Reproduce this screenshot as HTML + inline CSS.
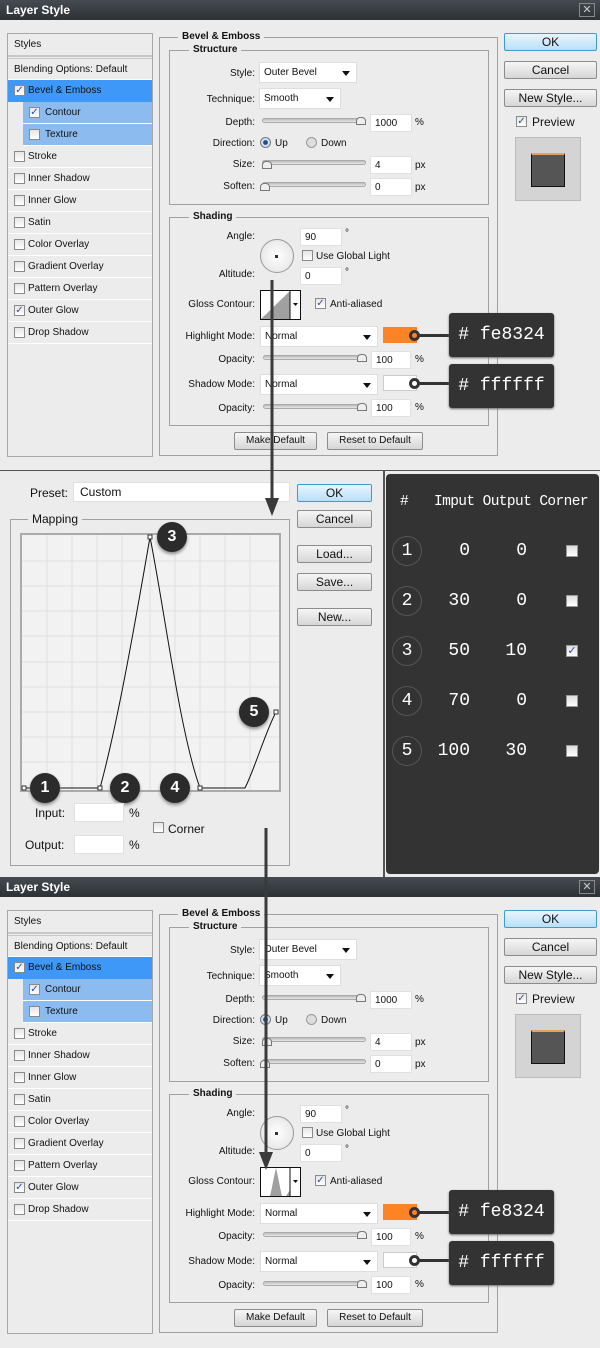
<!DOCTYPE html><html><head><meta charset="utf-8"><style>
*{margin:0;padding:0;box-sizing:border-box}
body{width:600px;height:1348px;background:#ececec;font-family:"Liberation Sans",Tahoma,sans-serif;font-size:10px;color:#111;position:relative;overflow:hidden}
.a{position:absolute}
.dlg{position:absolute;left:0;width:600px;height:470px;background:#ececec}
.tb{position:absolute;left:0;top:0;width:600px;height:20px;background:linear-gradient(#454b50,#2c3135);color:#fff;font-weight:bold;font-size:12px;padding:3px 6px}
.x{position:absolute;left:579px;top:3px;width:16px;height:14px;border:1px solid #888;color:#ccc;font-size:11px;text-align:center;line-height:12px}
.lp{position:absolute;left:7px;top:33px;width:146px;height:424px;border:1px solid #a8a8a8;background:#ececec}
.row{position:absolute;left:0;width:144px;height:22px;border-bottom:1px solid #fff;padding:5px 0 0 20px;font-size:10px}
.cb{position:absolute;width:11px;height:11px;border:1px solid #8a8a8a;background:linear-gradient(#e6e6e6,#fff);font-size:10px;line-height:9px;text-align:center;color:#2a4fa8}
.row .cb{left:6px;top:5px}
.gb{position:absolute;border:1px solid #a0a0a0}
.lg{position:absolute;background:#ececec;font-weight:bold;padding:0 4px;font-size:10px}
.lb{position:absolute;text-align:right;width:120px;font-size:10px}
.in{position:absolute;background:#fff;border:1px solid #e0e0e0;font-size:10px;padding:3px 4px;height:18px}
.sel{position:absolute;background:#fff;border:1px solid #ddd;font-size:10px;padding:4px 4px;height:21px}
.sel:after{content:"";position:absolute;right:6px;top:8px;border:4px solid transparent;border-top:5px solid #111}
.sl{position:absolute;height:5px;background:linear-gradient(#bbb,#e8e8e8);border:1px solid #aaa;border-radius:3px}
.th{position:absolute;width:10px;height:8px;background:#eee;border:1px solid #777;border-radius:4px 4px 0 0}
.bt{position:absolute;height:18px;border:1px solid #8c8c8c;border-radius:2px;background:linear-gradient(#f6f6f6,#d6d6d6);text-align:center;font-size:12px;line-height:16px;color:#111}
.sb{font-size:10px;line-height:16px}
.ok{background:linear-gradient(#e8f5ff,#b8e0f8);border-color:#3c9ad8}
.tag{position:absolute;left:449px;width:105px;height:44px;background:#333;border-radius:3px;color:#fff;font-family:"Liberation Mono",monospace;font-size:18px;line-height:44px;text-align:center;box-shadow:0 1px 2px #666}
.badge{position:absolute;width:30px;height:30px;border-radius:50%;background:#2b2b2b;color:#fff;font-size:16px;font-weight:bold;text-align:center;line-height:30px;box-shadow:0 2px 3px #888}
.rc{position:absolute;left:392px;width:30px;height:30px;border-radius:50%;border:1px solid #555;color:#fff;font-family:"Liberation Mono",monospace;font-size:18px;text-align:center;line-height:28px}
.tv{position:absolute;color:#fff;font-family:"Liberation Mono",monospace;font-size:18px;text-align:right;width:50px}
.tc{position:absolute;left:566px;width:12px;height:12px;border:1px solid #999;background:linear-gradient(#ddd,#fff);color:#2a4fa8;font-size:11px;line-height:10px;text-align:center}
</style></head><body>

<div class="dlg" style="top:0">
<div class="tb">Layer Style</div><div class="x">✕</div>
<div class="lp">
<div class="row" style="top:0;height:23px;padding-left:6px;border-bottom:2px solid #c8c8c8">Styles</div>
<div class="row" style="top:24px;padding-left:6px;border-top:1px solid #c8c8c8">Blending Options: Default</div>
<div class="row" style="top:46px;background:#3d98f8;border:0"><span class="cb">✓</span>Bevel &amp; Emboss</div>
<div class="row" style="top:68px;left:15px;width:129px;background:#8cbcef;padding-left:22px"><span class="cb" style="left:6px">✓</span>Contour</div>
<div class="row" style="top:90px;left:15px;width:129px;background:#8cbcef;padding-left:22px"><span class="cb" style="left:6px"></span>Texture</div>
<div class="row" style="top:112px"><span class="cb"></span>Stroke</div>
<div class="row" style="top:134px"><span class="cb"></span>Inner Shadow</div>
<div class="row" style="top:156px"><span class="cb"></span>Inner Glow</div>
<div class="row" style="top:178px"><span class="cb"></span>Satin</div>
<div class="row" style="top:200px"><span class="cb"></span>Color Overlay</div>
<div class="row" style="top:222px"><span class="cb"></span>Gradient Overlay</div>
<div class="row" style="top:244px"><span class="cb"></span>Pattern Overlay</div>
<div class="row" style="top:266px"><span class="cb">✓</span>Outer Glow</div>
<div class="row" style="top:288px"><span class="cb"></span>Drop Shadow</div>
</div>
<div class="gb" style="left:159px;top:37px;width:339px;height:419px"></div>
<div class="lg" style="left:178px;top:31px">Bevel &amp; Emboss</div>
<div class="gb" style="left:169px;top:50px;width:320px;height:155px"></div>
<div class="lg" style="left:189px;top:44px">Structure</div>
<div class="lb" style="left:135px;top:68px">Style:</div><div class="sel" style="left:259px;top:62px;width:98px">Outer Bevel</div>
<div class="lb" style="left:135px;top:94px">Technique:</div><div class="sel" style="left:259px;top:88px;width:82px">Smooth</div>
<div class="lb" style="left:135px;top:117px">Depth:</div><div class="sl" style="left:262px;top:118px;width:104px"></div><div class="th" style="left:356px;top:117px"></div><div class="in" style="left:370px;top:114px;width:42px">1000</div><div class="a" style="left:415px;top:117px">%</div>
<div class="lb" style="left:135px;top:138px">Direction:</div><div class="a" style="left:260px;top:137px;width:11px;height:11px;border-radius:50%;border:1px solid #777;background:radial-gradient(#1c4f8a 30%,#cfe3f5 45%)"></div><div class="a" style="left:275px;top:138px">Up</div><div class="a" style="left:306px;top:137px;width:11px;height:11px;border-radius:50%;border:1px solid #999;background:#ddd"></div><div class="a" style="left:321px;top:138px">Down</div>
<div class="lb" style="left:135px;top:159px">Size:</div><div class="sl" style="left:262px;top:160px;width:104px"></div><div class="th" style="left:262px;top:161px"></div><div class="in" style="left:370px;top:156px;width:42px">4</div><div class="a" style="left:415px;top:160px">px</div>
<div class="lb" style="left:135px;top:181px">Soften:</div><div class="sl" style="left:262px;top:182px;width:104px"></div><div class="th" style="left:260px;top:183px"></div><div class="in" style="left:370px;top:178px;width:42px">0</div><div class="a" style="left:415px;top:182px">px</div>
<div class="gb" style="left:169px;top:217px;width:320px;height:209px"></div>
<div class="lg" style="left:189px;top:211px">Shading</div>
<div class="lb" style="left:135px;top:231px">Angle:</div><div class="a" style="left:260px;top:239px;width:34px;height:34px;border-radius:50%;border:1px solid #999;background:radial-gradient(#fff,#e0e0e0)"></div><div class="a" style="left:275px;top:255px;width:3px;height:3px;background:#333"></div><div class="in" style="left:300px;top:228px;width:42px">90</div><div class="a" style="left:345px;top:228px">°</div>
<div class="cb" style="left:302px;top:250px"></div><div class="a" style="left:316px;top:251px">Use Global Light</div>
<div class="lb" style="left:135px;top:269px">Altitude:</div><div class="in" style="left:300px;top:267px;width:42px">0</div><div class="a" style="left:345px;top:267px">°</div>
<div class="lb" style="left:135px;top:299px">Gloss Contour:</div>
<div class="a" style="left:260px;top:290px;width:41px;height:30px;border:1px solid #111;background:#fff"><svg width="39" height="28" class="a" style="left:0;top:0"><polygon points="0,28 29,0 29,28" fill="#a0a0a0"/><line x1="29" y1="0" x2="29" y2="28" stroke="#111"/><polygon points="32,12 37,12 34.5,15" fill="#111"/></svg></div>
<div class="cb" style="left:315px;top:298px">✓</div><div class="a" style="left:330px;top:299px">Anti-aliased</div>
<div class="lb" style="left:135px;top:331px">Highlight Mode:</div><div class="sel" style="left:260px;top:326px;width:118px">Normal</div><div class="a" style="left:383px;top:327px;width:34px;height:16px;background:#fe8324"></div>
<div class="lb" style="left:135px;top:354px">Opacity:</div><div class="sl" style="left:263px;top:355px;width:104px"></div><div class="th" style="left:357px;top:354px"></div><div class="in" style="left:371px;top:351px;width:40px">100</div><div class="a" style="left:415px;top:354px">%</div>
<div class="lb" style="left:135px;top:379px">Shadow Mode:</div><div class="sel" style="left:260px;top:374px;width:118px">Normal</div><div class="a" style="left:383px;top:375px;width:34px;height:16px;background:#fff;border:1px solid #ccc"></div>
<div class="lb" style="left:135px;top:403px">Opacity:</div><div class="sl" style="left:263px;top:404px;width:104px"></div><div class="th" style="left:357px;top:403px"></div><div class="in" style="left:371px;top:399px;width:40px">100</div><div class="a" style="left:415px;top:402px">%</div>
<div class="bt sb" style="left:234px;top:432px;width:83px">Make Default</div>
<div class="bt sb" style="left:327px;top:432px;width:96px">Reset to Default</div>
<div class="bt ok" style="left:504px;top:33px;width:93px">OK</div>
<div class="bt" style="left:504px;top:61px;width:93px">Cancel</div>
<div class="bt" style="left:504px;top:89px;width:93px">New Style...</div>
<div class="cb" style="left:516px;top:116px">✓</div><div class="a" style="left:532px;top:115px;font-size:12px">Preview</div>
<div class="a" style="left:515px;top:137px;width:66px;height:64px;background:#d4d4d4;border:1px solid #bbb"></div>
<div class="a" style="left:531px;top:153px;width:34px;height:34px;background:#555;border:1px solid #111;border-top:2px solid #e8a060"></div>
<div class="a" style="left:416px;top:334px;width:33px;height:3px;background:#333"></div>
<div class="a" style="left:409px;top:330px;width:11px;height:11px;border-radius:50%;border:3px solid #333;background:#fe8324"></div>
<div class="tag" style="top:313px"># fe8324</div>
<div class="a" style="left:416px;top:382px;width:33px;height:3px;background:#333"></div>
<div class="a" style="left:409px;top:378px;width:11px;height:11px;border-radius:50%;border:3px solid #333;background:#fff"></div>
<div class="tag" style="top:364px"># ffffff</div>
</div>

<div class="a" style="left:0;top:470px;width:600px;height:407px;background:#ececec;border-top:1px solid #555"></div>
<div class="a" style="left:383px;top:470px;width:2px;height:407px;background:#555"></div>
<div class="a" style="left:386px;top:474px;width:213px;height:400px;background:#333;border-radius:4px"></div>
<div class="a" style="left:30px;top:486px;font-size:12px">Preset:</div>
<div class="in" style="left:73px;top:482px;width:217px;height:20px;font-size:12px;padding:2px 6px">Custom</div>
<div class="bt ok" style="left:297px;top:484px;width:75px">OK</div>
<div class="bt" style="left:297px;top:510px;width:75px">Cancel</div>
<div class="bt" style="left:297px;top:545px;width:75px">Load...</div>
<div class="bt" style="left:297px;top:573px;width:75px">Save...</div>
<div class="bt" style="left:297px;top:608px;width:75px">New...</div>
<div class="gb" style="left:10px;top:519px;width:280px;height:347px"></div>
<div class="lg" style="left:28px;top:512px;font-weight:normal;font-size:12px">Mapping</div>
<svg class="a" style="left:20px;top:533px" width="261" height="259">
<rect x="1" y="1" width="259" height="257" fill="#f2f2f2" stroke="#aaa" stroke-width="2"/>
<g stroke="#e0e0e0" stroke-width="1">
<line x1="27" y1="2" x2="27" y2="257"/><line x1="52" y1="2" x2="52" y2="257"/><line x1="77" y1="2" x2="77" y2="257"/><line x1="102" y1="2" x2="102" y2="257"/><line x1="130" y1="2" x2="130" y2="257"/><line x1="155" y1="2" x2="155" y2="257"/><line x1="180" y1="2" x2="180" y2="257"/><line x1="205" y1="2" x2="205" y2="257"/><line x1="230" y1="2" x2="230" y2="257"/>
<line x1="2" y1="28" x2="259" y2="28"/><line x1="2" y1="53" x2="259" y2="53"/><line x1="2" y1="78" x2="259" y2="78"/><line x1="2" y1="103" x2="259" y2="103"/><line x1="2" y1="129" x2="259" y2="129"/><line x1="2" y1="154" x2="259" y2="154"/><line x1="2" y1="179" x2="259" y2="179"/><line x1="2" y1="204" x2="259" y2="204"/><line x1="2" y1="229" x2="259" y2="229"/>
</g>
<path d="M4 255 L80 255 C95 200 110 120 130 4 C145 80 160 200 180 255 L225 255 C235 235 245 200 256 179" fill="none" stroke="#111" stroke-width="1"/>
<g fill="#fff" stroke="#333"><rect x="2" y="253" width="4" height="4"/><rect x="78" y="253" width="4" height="4"/><rect x="128" y="2" width="4" height="4"/><rect x="178" y="253" width="4" height="4"/><rect x="254" y="177" width="4" height="4"/></g>
</svg>
<div class="badge" style="left:30px;top:773px">1</div>
<div class="badge" style="left:110px;top:773px">2</div>
<div class="badge" style="left:157px;top:522px">3</div>
<div class="badge" style="left:160px;top:773px">4</div>
<div class="badge" style="left:239px;top:697px">5</div>
<div class="a" style="left:35px;top:806px;font-size:12px">Input:</div>
<div class="in" style="left:74px;top:803px;width:50px;height:19px"></div><div class="a" style="left:129px;top:806px;font-size:12px">%</div>
<div class="cb" style="left:153px;top:822px"></div><div class="a" style="left:168px;top:822px;font-size:12px">Corner</div>
<div class="a" style="left:25px;top:838px;font-size:12px">Output:</div>
<div class="in" style="left:74px;top:835px;width:50px;height:19px"></div><div class="a" style="left:129px;top:838px;font-size:12px">%</div>
<div class="a" style="left:400px;top:494px;color:#fff;font-family:'Liberation Mono',monospace;font-size:14.5px">#</div>
<div class="a" style="left:434px;top:494px;color:#fff;font-family:'Liberation Mono',monospace;font-size:14.5px;letter-spacing:-0.6px">Imput Output Corner</div>
<div class="rc" style="top:536px">1</div><div class="tv" style="left:420px;top:541px">0</div><div class="tv" style="left:477px;top:541px">0</div><div class="tc" style="top:545px"></div>
<div class="rc" style="top:586px">2</div><div class="tv" style="left:420px;top:591px">30</div><div class="tv" style="left:477px;top:591px">0</div><div class="tc" style="top:595px"></div>
<div class="rc" style="top:636px">3</div><div class="tv" style="left:420px;top:641px">50</div><div class="tv" style="left:477px;top:641px">10</div><div class="tc" style="top:645px">✓</div>
<div class="rc" style="top:686px">4</div><div class="tv" style="left:420px;top:691px">70</div><div class="tv" style="left:477px;top:691px">0</div><div class="tc" style="top:695px"></div>
<div class="rc" style="top:736px">5</div><div class="tv" style="left:420px;top:741px">100</div><div class="tv" style="left:477px;top:741px">30</div><div class="tc" style="top:745px"></div>

<div class="dlg" style="top:877px">
<div class="tb">Layer Style</div><div class="x">✕</div>
<div class="lp">
<div class="row" style="top:0;height:23px;padding-left:6px;border-bottom:2px solid #c8c8c8">Styles</div>
<div class="row" style="top:24px;padding-left:6px;border-top:1px solid #c8c8c8">Blending Options: Default</div>
<div class="row" style="top:46px;background:#3d98f8;border:0"><span class="cb">✓</span>Bevel &amp; Emboss</div>
<div class="row" style="top:68px;left:15px;width:129px;background:#8cbcef;padding-left:22px"><span class="cb" style="left:6px">✓</span>Contour</div>
<div class="row" style="top:90px;left:15px;width:129px;background:#8cbcef;padding-left:22px"><span class="cb" style="left:6px"></span>Texture</div>
<div class="row" style="top:112px"><span class="cb"></span>Stroke</div>
<div class="row" style="top:134px"><span class="cb"></span>Inner Shadow</div>
<div class="row" style="top:156px"><span class="cb"></span>Inner Glow</div>
<div class="row" style="top:178px"><span class="cb"></span>Satin</div>
<div class="row" style="top:200px"><span class="cb"></span>Color Overlay</div>
<div class="row" style="top:222px"><span class="cb"></span>Gradient Overlay</div>
<div class="row" style="top:244px"><span class="cb"></span>Pattern Overlay</div>
<div class="row" style="top:266px"><span class="cb">✓</span>Outer Glow</div>
<div class="row" style="top:288px"><span class="cb"></span>Drop Shadow</div>
</div>
<div class="gb" style="left:159px;top:37px;width:339px;height:419px"></div>
<div class="lg" style="left:178px;top:31px">Bevel &amp; Emboss</div>
<div class="gb" style="left:169px;top:50px;width:320px;height:155px"></div>
<div class="lg" style="left:189px;top:44px">Structure</div>
<div class="lb" style="left:135px;top:68px">Style:</div><div class="sel" style="left:259px;top:62px;width:98px">Outer Bevel</div>
<div class="lb" style="left:135px;top:94px">Technique:</div><div class="sel" style="left:259px;top:88px;width:82px">Smooth</div>
<div class="lb" style="left:135px;top:117px">Depth:</div><div class="sl" style="left:262px;top:118px;width:104px"></div><div class="th" style="left:356px;top:117px"></div><div class="in" style="left:370px;top:114px;width:42px">1000</div><div class="a" style="left:415px;top:117px">%</div>
<div class="lb" style="left:135px;top:138px">Direction:</div><div class="a" style="left:260px;top:137px;width:11px;height:11px;border-radius:50%;border:1px solid #777;background:radial-gradient(#1c4f8a 30%,#cfe3f5 45%)"></div><div class="a" style="left:275px;top:138px">Up</div><div class="a" style="left:306px;top:137px;width:11px;height:11px;border-radius:50%;border:1px solid #999;background:#ddd"></div><div class="a" style="left:321px;top:138px">Down</div>
<div class="lb" style="left:135px;top:159px">Size:</div><div class="sl" style="left:262px;top:160px;width:104px"></div><div class="th" style="left:262px;top:161px"></div><div class="in" style="left:370px;top:156px;width:42px">4</div><div class="a" style="left:415px;top:160px">px</div>
<div class="lb" style="left:135px;top:181px">Soften:</div><div class="sl" style="left:262px;top:182px;width:104px"></div><div class="th" style="left:260px;top:183px"></div><div class="in" style="left:370px;top:178px;width:42px">0</div><div class="a" style="left:415px;top:182px">px</div>
<div class="gb" style="left:169px;top:217px;width:320px;height:209px"></div>
<div class="lg" style="left:189px;top:211px">Shading</div>
<div class="lb" style="left:135px;top:231px">Angle:</div><div class="a" style="left:260px;top:239px;width:34px;height:34px;border-radius:50%;border:1px solid #999;background:radial-gradient(#fff,#e0e0e0)"></div><div class="a" style="left:275px;top:255px;width:3px;height:3px;background:#333"></div><div class="in" style="left:300px;top:228px;width:42px">90</div><div class="a" style="left:345px;top:228px">°</div>
<div class="cb" style="left:302px;top:250px"></div><div class="a" style="left:316px;top:251px">Use Global Light</div>
<div class="lb" style="left:135px;top:269px">Altitude:</div><div class="in" style="left:300px;top:267px;width:42px">0</div><div class="a" style="left:345px;top:267px">°</div>
<div class="lb" style="left:135px;top:299px">Gloss Contour:</div>
<div class="a" style="left:260px;top:290px;width:41px;height:30px;border:1px solid #111;background:#fff"><svg width="39" height="28" class="a" style="left:0;top:0"><path d="M4 28 L9 28 C11 20 13 8 15 0 C17 8 19 20 21 28 L25 28 L29 22 L29 28 Z" fill="#a0a0a0"/><line x1="29" y1="0" x2="29" y2="28" stroke="#111"/><polygon points="32,12 37,12 34.5,15" fill="#111"/></svg></div>
<div class="cb" style="left:315px;top:298px">✓</div><div class="a" style="left:330px;top:299px">Anti-aliased</div>
<div class="lb" style="left:135px;top:331px">Highlight Mode:</div><div class="sel" style="left:260px;top:326px;width:118px">Normal</div><div class="a" style="left:383px;top:327px;width:34px;height:16px;background:#fe8324"></div>
<div class="lb" style="left:135px;top:354px">Opacity:</div><div class="sl" style="left:263px;top:355px;width:104px"></div><div class="th" style="left:357px;top:354px"></div><div class="in" style="left:371px;top:351px;width:40px">100</div><div class="a" style="left:415px;top:354px">%</div>
<div class="lb" style="left:135px;top:379px">Shadow Mode:</div><div class="sel" style="left:260px;top:374px;width:118px">Normal</div><div class="a" style="left:383px;top:375px;width:34px;height:16px;background:#fff;border:1px solid #ccc"></div>
<div class="lb" style="left:135px;top:403px">Opacity:</div><div class="sl" style="left:263px;top:404px;width:104px"></div><div class="th" style="left:357px;top:403px"></div><div class="in" style="left:371px;top:399px;width:40px">100</div><div class="a" style="left:415px;top:402px">%</div>
<div class="bt sb" style="left:234px;top:432px;width:83px">Make Default</div>
<div class="bt sb" style="left:327px;top:432px;width:96px">Reset to Default</div>
<div class="bt ok" style="left:504px;top:33px;width:93px">OK</div>
<div class="bt" style="left:504px;top:61px;width:93px">Cancel</div>
<div class="bt" style="left:504px;top:89px;width:93px">New Style...</div>
<div class="cb" style="left:516px;top:116px">✓</div><div class="a" style="left:532px;top:115px;font-size:12px">Preview</div>
<div class="a" style="left:515px;top:137px;width:66px;height:64px;background:#d4d4d4;border:1px solid #bbb"></div>
<div class="a" style="left:531px;top:153px;width:34px;height:34px;background:#555;border:1px solid #111;border-top:2px solid #e8a060"></div>
<div class="a" style="left:416px;top:334px;width:33px;height:3px;background:#333"></div>
<div class="a" style="left:409px;top:330px;width:11px;height:11px;border-radius:50%;border:3px solid #333;background:#fe8324"></div>
<div class="tag" style="top:313px"># fe8324</div>
<div class="a" style="left:416px;top:382px;width:33px;height:3px;background:#333"></div>
<div class="a" style="left:409px;top:378px;width:11px;height:11px;border-radius:50%;border:3px solid #333;background:#fff"></div>
<div class="tag" style="top:364px"># ffffff</div>
</div>

<svg class="a" style="left:0;top:0" width="600" height="1348">
<line x1="272" y1="280" x2="272" y2="500" stroke="#3a3a3a" stroke-width="3"/>
<polygon points="265,498 279,498 272,516" fill="#3a3a3a"/>
<line x1="266" y1="828" x2="266" y2="1154" stroke="#3a3a3a" stroke-width="3"/>
<polygon points="259,1152 273,1152 266,1170" fill="#3a3a3a"/>
</svg>
</body></html>
